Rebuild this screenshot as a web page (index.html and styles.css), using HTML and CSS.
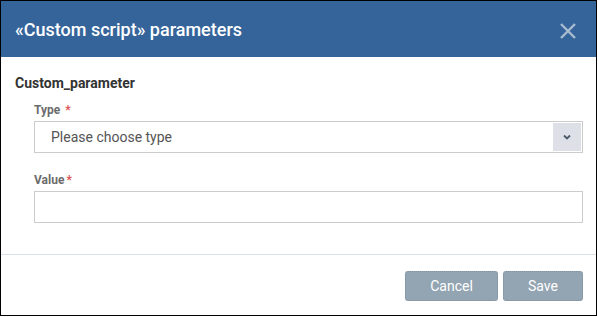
FILE: index.html
```html
<!DOCTYPE html>
<html lang="en">
<head>
    <meta charset="UTF-8">
    <title>Custom script parameters</title>
    <link rel="stylesheet" href="styles.css">
</head>
<body>
    <div class="modal">
        <div class="modal-header">
            <h2>«Custom script» parameters</h2>
            <button class="close-btn" aria-label="Close">
                <svg width="16" height="16" viewBox="0 0 16 16">
                    <path d="M1 1 L15 15 M15 1 L1 15" stroke="#a9bbd0" stroke-width="2.4" fill="none"/>
                </svg>
            </button>
        </div>

        <div class="modal-body">
            <h3>Custom_parameter</h3>

            <div class="form-group">
                <label>Type <span class="req">*</span></label>
                <div class="select-box">
                    <span class="placeholder">Please choose type</span>
                    <span class="select-arrow">
                        <svg width="10" height="8" viewBox="0 0 10 8">
                            <path d="M2 2.5 L5 5.5 L8 2.5" stroke="#4a5a6a" stroke-width="1.8" fill="none"/>
                        </svg>
                    </span>
                </div>
            </div>

            <div class="form-group">
                <label>Value<span class="req">*</span></label>
                <input type="text" class="text-input">
            </div>
        </div>

        <div class="modal-footer">
            <button class="btn btn-cancel">Cancel</button>
            <button class="btn btn-save">Save</button>
        </div>
    </div>
</body>
</html>
```

FILE: styles.css
```css
body {
    margin: 0;
    background: #fff;
    font-family: Roboto, 'Liberation Sans', Arial, sans-serif;
}
.modal {
    width: 597px;
    height: 316px;
    box-sizing: border-box;
    border: 1px solid #000;
    background: #fff;
    display: flex;
    flex-direction: column;
}
.modal-header {
    height: 56px;
    flex-shrink: 0;
    background: #35649a;
    display: flex;
    align-items: center;
    justify-content: space-between;
    padding: 0 20px 0 14px;
}
.modal-header h2 {
    margin: 0;
    color: #fff;
    font-size: 18px;
    font-weight: 500;
}
.close-btn {
    background: none;
    border: none;
    padding: 0;
    margin-top: 3px;
    display: flex;
    cursor: pointer;
}
.modal-body {
    flex: 1;
    padding: 18px 13px 0 14px;
}
.modal-body h3 {
    margin: 0 0 12px;
    font-size: 14px;
    font-weight: 700;
    color: #333;
}
.form-group {
    margin-left: 19px;
    margin-bottom: 20px;
}
.form-group label {
    display: block;
    font-size: 12px;
    line-height: 14px;
    font-weight: 700;
    color: #6b6b6b;
    margin-bottom: 4px;
}
.req {
    color: #d9534f;
    margin-left: 2px;
}
.select-box {
    height: 32px;
    box-sizing: border-box;
    border: 1px solid #ccc;
    display: flex;
    align-items: center;
    justify-content: space-between;
    padding: 0 1px 0 16px;
}
.placeholder {
    font-size: 14px;
    color: #555;
}
.select-arrow {
    width: 28px;
    height: 28px;
    background: #dde1e7;
    display: flex;
    align-items: center;
    justify-content: center;
}
.text-input {
    display: block;
    width: 100%;
    height: 32px;
    box-sizing: border-box;
    border: 1px solid #ccc;
    font-size: 14px;
    padding: 0 10px;
    outline: none;
}
.modal-footer {
    height: 61px;
    flex-shrink: 0;
    box-sizing: border-box;
    border-top: 1px solid #dbe1e6;
    display: flex;
    justify-content: flex-end;
    gap: 5px;
    padding: 16px 13px 0 0;
}
.btn {
    height: 30px;
    border: 1px dotted #7f909e;
    border-radius: 3px;
    background: #93a4b2;
    color: #fff;
    font-family: Roboto, 'Liberation Sans', Arial, sans-serif;
    font-size: 14px;
    cursor: pointer;
}
.btn-cancel {
    width: 93px;
}
.btn-save {
    width: 80px;
}
```
